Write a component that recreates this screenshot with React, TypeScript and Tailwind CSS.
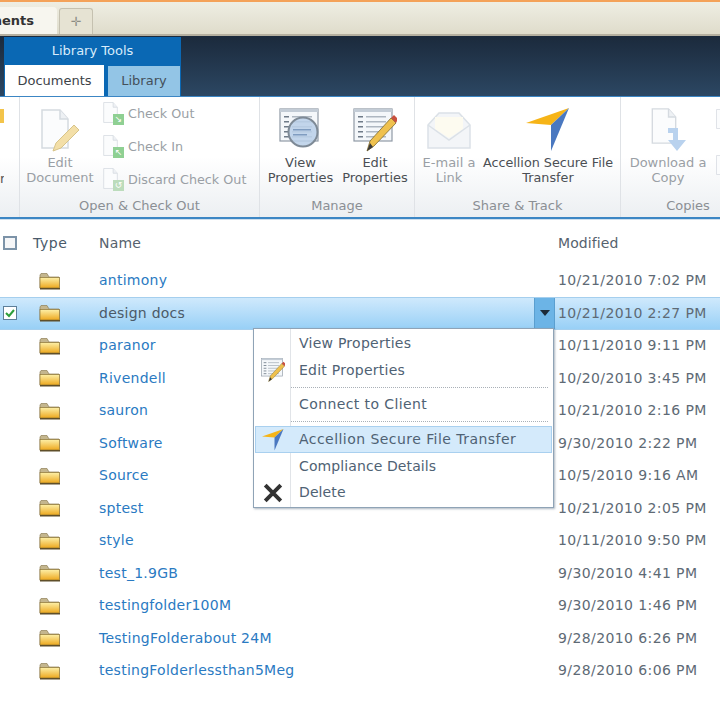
import React from 'react';

const rows = [
  { name: 'antimony', date: '10/21/2010 7:02 PM' },
  { name: 'design docs', date: '10/21/2010 2:27 PM', selected: true },
  { name: 'paranor', date: '10/11/2010 9:11 PM' },
  { name: 'Rivendell', date: '10/20/2010 3:45 PM' },
  { name: 'sauron', date: '10/21/2010 2:16 PM' },
  { name: 'Software', date: '9/30/2010 2:22 PM' },
  { name: 'Source', date: '10/5/2010 9:16 AM' },
  { name: 'sptest', date: '10/21/2010 2:05 PM' },
  { name: 'style', date: '10/11/2010 9:50 PM' },
  { name: 'test_1.9GB', date: '9/30/2010 4:41 PM' },
  { name: 'testingfolder100M', date: '9/30/2010 1:46 PM' },
  { name: 'TestingFolderabout 24M', date: '9/28/2010 6:26 PM' },
  { name: 'testingFolderlessthan5Meg', date: '9/28/2010 6:06 PM' },
];

function Folder() {
  return (
    <svg width="22" height="18" viewBox="0 0 22 18">
      <defs>
        <linearGradient id="fold" x1="0" y1="0" x2="0" y2="1">
          <stop offset="0" stopColor="#fdf0a8" />
          <stop offset="1" stopColor="#eda81e" />
        </linearGradient>
      </defs>
      <path d="M1 3 L1 16 L20 16 L20 5 L10 5 L8 1.5 L2 1.5 Z" fill="#c4b68e" stroke="#8f8058" strokeWidth="0.7" />
      <rect x="1" y="5.5" width="19.5" height="10.5" fill="url(#fold)" stroke="#8a7236" strokeWidth="0.7" />
      <rect x="1" y="16" width="20" height="1.5" fill="#5f4f2a" />
    </svg>
  );
}

function Arrow({ size }: { size: number }) {
  return (
    <svg width={size} height={size} viewBox="0 0 44 44">
      <path d="M0 15 L43 0 L25 17 Z" fill="#f6b417" />
      <path d="M43 0 L25 43 L25 17 Z" fill="#4a78c0" />
    </svg>
  );
}

function PageIcon({ w, h }: { w: number; h: number }) {
  return (
    <svg width={w} height={h} viewBox="0 0 30 40">
      <path d="M2 1 L20 1 L28 10 L28 39 L2 39 Z" fill="#fbfcfd" stroke="#d5dae0" strokeWidth="1.5" />
      <path d="M20 1 L20 10 L28 10" fill="#eef1f4" stroke="#d5dae0" strokeWidth="1.5" />
    </svg>
  );
}

function SmallCommand({ label, color, glyph }: { label: string; color: string; glyph: string }) {
  return (
    <div className="flex items-center h-[33px] text-[#9a9fa5] text-[12.75px]">
      <div className="relative w-[22px] h-[23px] ml-[2px] mr-[4px]">
        <PageIcon w={17} h={21} />
        <div className={`absolute right-0 bottom-0 w-[11px] h-[11px] flex items-center justify-center text-[9px] leading-none text-white ${color}`}>{glyph}</div>
      </div>
      <span>{label}</span>
    </div>
  );
}

function Group({ width, label, children, border = true }: { width: string; label: string; children?: React.ReactNode; border?: boolean }) {
  return (
    <div className={`flex flex-col shrink-0 h-full ${width} ${border ? 'border-r border-[#dfe2e6]' : ''}`}>
      <div className="flex-1 flex">{children}</div>
      <div className="h-[21px] text-center text-[13px] leading-[19px] text-[#8b8f94] whitespace-nowrap">{label}</div>
    </div>
  );
}

function LargeCommand({ width, icon, lines, faded }: { width: string; icon: React.ReactNode; lines: string[]; faded?: boolean }) {
  return (
    <div className={`flex flex-col items-center shrink-0 ${width} ${faded ? 'text-[#9a9fa5]' : 'text-[#4b4f54]'}`}>
      <div className="h-[48px] mt-[9px] mb-[1px] flex items-center justify-center">{icon}</div>
      {lines.map((l) => (
        <div key={l} className="leading-[15px] whitespace-nowrap">{l}</div>
      ))}
    </div>
  );
}

function PropsIcon({ pencil }: { pencil?: boolean }) {
  return (
    <svg width="44" height="44" viewBox="0 0 44 44">
      <rect x="1" y="1" width="38" height="32" fill="#f4f7fa" stroke="#8f99a5" strokeWidth="1.2" />
      <rect x="1" y="1" width="38" height="3" fill="#c3ccd6" />
      {[8, 13, 18, 23, 28].map((y) => (
        <g key={y}>
          <rect x="5" y={y} width="5" height="1.5" fill="#6f7b88" />
          <rect x="13" y={y} width="20" height="1.5" fill="#aeb7c1" />
        </g>
      ))}
      {pencil ? (
        <g>
          <path d="M14 43 L17 33 L38 10 L43 15 L21 38 Z" fill="#efc14e" stroke="#7d6a30" strokeWidth="0.8" />
          <path d="M38 10 L41 7 L45 11 L43 15 Z" fill="#c8503f" />
          <path d="M14 43 L17 35 L20 39 Z" fill="#3a3a3a" />
        </g>
      ) : (
        <g>
          <circle cx="24" cy="24" r="14.5" fill="#b9cfe8" fillOpacity="0.85" stroke="#7e8a96" strokeWidth="2" />
          <rect x="14" y="21" width="18" height="1.5" fill="#7f9cc0" />
          <rect x="14" y="26" width="14" height="1.5" fill="#7f9cc0" />
        </g>
      )}
    </svg>
  );
}

function MenuItem({ label, icon, active, height, tracking }: { label: string; icon?: React.ReactNode; active?: boolean; height: string; tracking: string }) {
  return (
    <div className={`flex items-center mx-[1px] border ${height} ${active ? 'bg-[#d4eafb] border-[#a9d0ef]' : 'border-transparent'}`}>
      <div className="w-[34px] flex justify-center shrink-0">{icon}</div>
      <span className={`ml-[9px] whitespace-nowrap ${tracking}`}>{label}</span>
    </div>
  );
}

function MenuSeparator({ height }: { height: string }) {
  return (
    <div className={`flex items-center ml-[37px] mr-[5px] ${height}`}>
      <div className="w-full border-t border-dotted border-[#a9b0b7]" />
    </div>
  );
}

export default function App() {
  return (
    <div className="relative w-[720px] h-[720px] overflow-hidden bg-white text-[14px] font-['DejaVu_Sans',sans-serif] text-[#4b5a68] flex flex-col">
      {/* browser tabs */}
      <div className="h-[2px] bg-[#f4a259]" />
      <div className="h-[34px] bg-gradient-to-b from-[#efeee3] to-[#dfdccb] border-b-2 border-[#b5b0a0] flex items-end">
        <div className="w-[57px] h-[27px] bg-[#f7f6ef] rounded-tr-[4px] text-[13px] font-bold text-[#333] overflow-hidden flex justify-end items-center pr-[23px] whitespace-nowrap leading-none">
          <span>ments</span>
        </div>
        <div className="ml-[2px] w-[34px] h-[26px] bg-[#e6e3d3] border border-[#c5c1b0] border-b-0 rounded-t-[3px] flex items-center justify-center text-[#8d8d85] text-[13px]">✛</div>
      </div>
      {/* ribbon tabs */}
      <div className="h-[60px] bg-gradient-to-b from-[#1b2a3c] to-[#2c4763] flex flex-col items-start relative">
        <div className="ml-[4px] w-[177px] h-[27px] bg-[#0a68b4] text-center text-[13px] leading-[27px] text-[#d8ecfb] mt-[1px]">Library Tools</div>
        <div className="ml-[4px] w-[177px] h-[32px] bg-[#0a68b4] flex items-end">
          <div className="ml-[1px] w-[99px] h-[31px] bg-white text-center text-[13px] leading-[31px] text-[#3c4248]">Documents</div>
          <div className="ml-[4px] w-[72px] h-[30px] bg-[#93c5e6] text-center text-[13px] leading-[30px] text-[#44505a]">Library</div>
        </div>
      </div>
      <div className="h-[2px] bg-[#3c86c4] -mt-[1px]" />
      {/* ribbon */}
      <div className="h-[120px] bg-gradient-to-b from-white via-white to-[#eceff2] flex text-[13px] overflow-hidden">
        <Group width="w-[20px]" label="">
          <div className="w-full relative text-[#4b4f54]">
            <div className="absolute left-0 top-[12px] w-[4px] h-[14px] bg-[#f3c44a]" />
            <div className="absolute left-0 top-[74px] w-[4px] h-[15px] overflow-hidden leading-[15px] text-[#555]">r</div>
          </div>
        </Group>
        <Group width="w-[240px]" label="Open & Check Out">
          <LargeCommand width="w-[80px]" faded lines={['Edit', 'Document']} icon={
            <div className="relative w-[40px] h-[44px] flex justify-start">
              <PageIcon w={30} h={42} />
              <svg className="absolute right-0 bottom-0" width="28" height="30" viewBox="0 0 28 30">
                <path d="M1 29 L4 21 L22 3 L27 8 L9 26 Z" fill="#f3dfa8" stroke="#d7c48a" />
              </svg>
            </div>
          } />
          <div className="flex flex-col">
            <SmallCommand label="Check Out" color="bg-[#8fd093]" glyph="↘" />
            <SmallCommand label="Check In" color="bg-[#8fd093]" glyph="↖" />
            <SmallCommand label="Discard Check Out" color="bg-[#bcdcbc]" glyph="↺" />
          </div>
        </Group>
        <Group width="w-[155px]" label="Manage">
          <LargeCommand width="w-[81px]" lines={['View', 'Properties']} icon={<PropsIcon />} />
          <LargeCommand width="w-[68px]" lines={['Edit', 'Properties']} icon={<PropsIcon pencil />} />
        </Group>
        <Group width="w-[206px]" label="Share & Track">
          <LargeCommand width="w-[68px]" faded lines={['E-mail a', 'Link']} icon={
            <svg width="44" height="38" viewBox="0 0 44 38">
              <path d="M1 14 L12 2 L32 2 L43 14 L43 37 L1 37 Z" fill="#f3f5f8" stroke="#dbe1e7" strokeWidth="1.5" />
              <path d="M8 6 L36 6 L36 18 L22 27 L8 18 Z" fill="#fdfbf0" />
              <path d="M1 14 L22 29 L43 14" fill="none" stroke="#dbe1e7" strokeWidth="1.5" />
            </svg>
          } />
          <LargeCommand width="w-[130px] text-[12.75px]" lines={['Accellion Secure File', 'Transfer']} icon={<Arrow size={44} />} />
        </Group>
        <Group width="w-[134px]" border={false} label="Copies">
          <LargeCommand width="w-[94px]" faded lines={['Download a', 'Copy']} icon={
            <div className="relative w-[40px] h-[44px]">
              <div className="absolute left-[2px] top-0"><PageIcon w={28} h={36} /></div>
              <svg className="absolute right-0 bottom-0" width="22" height="26" viewBox="0 0 22 26">
                <path d="M2 2 L12 2 L12 14 L20 14 L11 25 L2 14 L7 14 L7 7 L2 7 Z" fill="#b9d2ee" />
              </svg>
            </div>
          } />
          <div className="flex flex-col gap-[26px] pt-[12px]">
            <PageIcon w={16} h={20} />
            <PageIcon w={16} h={20} />
          </div>
        </Group>
      </div>
      <div className="h-[2px] bg-[#3c86c4]" />
      <div className="h-[1px] bg-[#cfe0ee]" />
      {/* list header */}
      <div className="h-[44.5px] pt-[2px] flex items-center shrink-0 text-[#56626e]">
        <div className="w-[33px] pl-[3px]">
          <div className="w-[14px] h-[14px] border-2 border-[#7c93a8] bg-[#f5f6f8]" />
        </div>
        <div className="w-[66px] tracking-[0.6px] text-[#4a5a6a]">Type</div>
        <div className="w-[459px] tracking-[0.2px]">Name</div>
        <div className="tracking-[0.1px]">Modified</div>
      </div>
      {/* rows */}
      <div className="flex flex-col">
        {rows.map((r) => (
          <div
            key={r.name}
            className={`h-[32.5px] flex items-center shrink-0 ${r.selected ? 'bg-gradient-to-b from-[#cfe9fc] to-[#98d0f6] border-y border-[#a5cfee]' : ''}`}
          >
            <div className="w-[39px] pl-[3px]">
              {r.selected && (
                <div className="w-[14px] h-[14px] border border-[#5d7f99] bg-white flex items-center justify-center">
                  <svg width="10" height="10" viewBox="0 0 10 10">
                    <path d="M1 5 L4 8 L9 2" fill="none" stroke="#2e9e3a" strokeWidth="2" />
                  </svg>
                </div>
              )}
            </div>
            <div className="w-[60px]"><Folder /></div>
            <div className={`flex-1 whitespace-nowrap tracking-[0.25px] ${r.selected ? 'text-[#4b5a68]' : 'text-[#2a7ac2]'}`}>{r.name}</div>
            {r.selected && (
              <div className="w-[21px] h-full bg-[#6cb4e6] border-x border-[#5a9fd0] flex items-center justify-center mr-[3px]">
                <svg width="10" height="6" viewBox="0 0 10 6"><path d="M0 0 L10 0 L5 6 Z" fill="#1c2a38" /></svg>
              </div>
            )}
            <div className="w-[162px] whitespace-nowrap tracking-[0.4px] text-[#5e6a75]">{r.date}</div>
          </div>
        ))}
      </div>
      {/* context menu */}
      <div className="absolute left-[253px] top-[328px] w-[301px] h-[180px] bg-white border border-[#8fa3b6] shadow-[1px_1px_2px_rgba(90,110,130,0.5)] text-[#4f6274]">
        <div className="absolute left-[36px] top-0 bottom-0 w-[1px] bg-[#e1e4e8]" />
        <div className="relative flex flex-col pt-[1px]">
          <MenuItem height="h-[27px]" tracking="tracking-[0.25px]" label="View Properties" />
          <MenuItem height="h-[26px]" tracking="tracking-[0.25px]" label="Edit Properties" icon={<div className="scale-[0.55]"><PropsIcon pencil /></div>} />
          <MenuSeparator height="h-[8px]" />
          <MenuItem height="h-[26px]" tracking="tracking-[0.4px]" label="Connect to Client" />
          <MenuSeparator height="h-[9px]" />
          <MenuItem active height="h-[27px]" tracking="tracking-[0.45px]" label="Accellion Secure File Transfer" icon={<Arrow size={22} />} />
          <MenuItem height="h-[27px]" tracking="tracking-[0.1px]" label="Compliance Details" />
          <MenuItem height="h-[25px]" tracking="tracking-[0.1px]" label="Delete" icon={
            <svg width="20" height="20" viewBox="0 0 18 18"><path d="M2 2 L16 16 M16 2 L2 16" stroke="#333" strokeWidth="3.5" /></svg>
          } />
        </div>
      </div>
    </div>
  );
}
